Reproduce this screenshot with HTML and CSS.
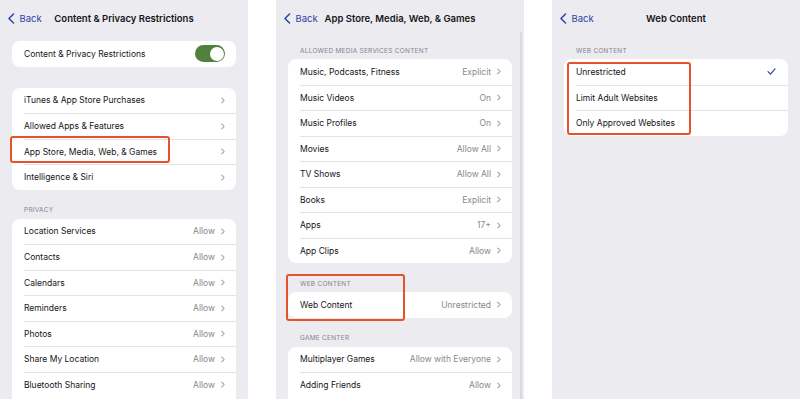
FILE: index.html
```html
<!DOCTYPE html>
<html lang="en">
<head>
  <meta charset="UTF-8" />
  <meta name="viewport" content="width=device-width, initial-scale=1.0"/>
  <title>Content &amp; Privacy Restrictions</title>
  <link rel="stylesheet" href="styles.css">
</head>
<body>

<div class="shots">

  <!-- 1 : Content & Privacy Restrictions -->
  <section class="phone">
    <header class="nav">
      <span class="back">
        <svg class="back-chev" viewBox="0 0 7 12"><path d="M6 1L1 6l5 5"/></svg>Back
      </span>
      <h1 class="title">Content &amp; Privacy Restrictions</h1>
      <span></span>
    </header>

    <div class="group group-first">
      <ul class="card">
        <li class="row"><span class="label">Content &amp; Privacy Restrictions</span><span class="toggle"></span></li>
      </ul>
    </div>

    <div class="group group-plain">
      <ul class="card">
        <li class="row"><span class="label">iTunes &amp; App Store Purchases</span><svg class="chev" viewBox="0 0 5 8"><path d="M1 1l3 3-3 3"/></svg></li>
        <li class="row"><span class="label">Allowed Apps &amp; Features</span><svg class="chev" viewBox="0 0 5 8"><path d="M1 1l3 3-3 3"/></svg></li>
        <li class="row"><span class="label">App Store, Media, Web, &amp; Games</span><svg class="chev" viewBox="0 0 5 8"><path d="M1 1l3 3-3 3"/></svg></li>
        <li class="row"><span class="label">Intelligence &amp; Siri</span><svg class="chev" viewBox="0 0 5 8"><path d="M1 1l3 3-3 3"/></svg></li>
      </ul>
    </div>

    <div class="group">
      <div class="group-head">Privacy</div>
      <ul class="card card-open">
        <li class="row"><span class="label">Location Services</span><span class="value">Allow</span><svg class="chev" viewBox="0 0 5 8"><path d="M1 1l3 3-3 3"/></svg></li>
        <li class="row"><span class="label">Contacts</span><span class="value">Allow</span><svg class="chev" viewBox="0 0 5 8"><path d="M1 1l3 3-3 3"/></svg></li>
        <li class="row"><span class="label">Calendars</span><span class="value">Allow</span><svg class="chev" viewBox="0 0 5 8"><path d="M1 1l3 3-3 3"/></svg></li>
        <li class="row"><span class="label">Reminders</span><span class="value">Allow</span><svg class="chev" viewBox="0 0 5 8"><path d="M1 1l3 3-3 3"/></svg></li>
        <li class="row"><span class="label">Photos</span><span class="value">Allow</span><svg class="chev" viewBox="0 0 5 8"><path d="M1 1l3 3-3 3"/></svg></li>
        <li class="row"><span class="label">Share My Location</span><span class="value">Allow</span><svg class="chev" viewBox="0 0 5 8"><path d="M1 1l3 3-3 3"/></svg></li>
        <li class="row"><span class="label">Bluetooth Sharing</span><span class="value">Allow</span><svg class="chev" viewBox="0 0 5 8"><path d="M1 1l3 3-3 3"/></svg></li>
      </ul>
    </div>

    <div class="mark mark-1"></div>
  </section>

  <!-- 2 : App Store, Media, Web, & Games -->
  <section class="phone">
    <header class="nav">
      <span class="back">
        <svg class="back-chev" viewBox="0 0 7 12"><path d="M6 1L1 6l5 5"/></svg>Back
      </span>
      <h1 class="title">App Store, Media, Web, &amp; Games</h1>
      <span></span>
    </header>

    <div class="group">
      <div class="group-head">Allowed Media Services Content</div>
      <ul class="card">
        <li class="row"><span class="label">Music, Podcasts, Fitness</span><span class="value">Explicit</span><svg class="chev" viewBox="0 0 5 8"><path d="M1 1l3 3-3 3"/></svg></li>
        <li class="row"><span class="label">Music Videos</span><span class="value">On</span><svg class="chev" viewBox="0 0 5 8"><path d="M1 1l3 3-3 3"/></svg></li>
        <li class="row"><span class="label">Music Profiles</span><span class="value">On</span><svg class="chev" viewBox="0 0 5 8"><path d="M1 1l3 3-3 3"/></svg></li>
        <li class="row"><span class="label">Movies</span><span class="value">Allow All</span><svg class="chev" viewBox="0 0 5 8"><path d="M1 1l3 3-3 3"/></svg></li>
        <li class="row"><span class="label">TV Shows</span><span class="value">Allow All</span><svg class="chev" viewBox="0 0 5 8"><path d="M1 1l3 3-3 3"/></svg></li>
        <li class="row"><span class="label">Books</span><span class="value">Explicit</span><svg class="chev" viewBox="0 0 5 8"><path d="M1 1l3 3-3 3"/></svg></li>
        <li class="row"><span class="label">Apps</span><span class="value">17+</span><svg class="chev" viewBox="0 0 5 8"><path d="M1 1l3 3-3 3"/></svg></li>
        <li class="row"><span class="label">App Clips</span><span class="value">Allow</span><svg class="chev" viewBox="0 0 5 8"><path d="M1 1l3 3-3 3"/></svg></li>
      </ul>
    </div>

    <div class="group">
      <div class="group-head">Web Content</div>
      <ul class="card">
        <li class="row"><span class="label">Web Content</span><span class="value">Unrestricted</span><svg class="chev" viewBox="0 0 5 8"><path d="M1 1l3 3-3 3"/></svg></li>
      </ul>
    </div>

    <div class="group">
      <div class="group-head">Game Center</div>
      <ul class="card card-open">
        <li class="row"><span class="label">Multiplayer Games</span><span class="value">Allow with Everyone</span><svg class="chev" viewBox="0 0 5 8"><path d="M1 1l3 3-3 3"/></svg></li>
        <li class="row"><span class="label">Adding Friends</span><span class="value">Allow</span><svg class="chev" viewBox="0 0 5 8"><path d="M1 1l3 3-3 3"/></svg></li>
      </ul>
    </div>

    <div class="scroller"></div>
    <div class="mark mark-2"></div>
  </section>

  <!-- 3 : Web Content -->
  <section class="phone">
    <header class="nav">
      <span class="back">
        <svg class="back-chev" viewBox="0 0 7 12"><path d="M6 1L1 6l5 5"/></svg>Back
      </span>
      <h1 class="title">Web Content</h1>
      <span></span>
    </header>

    <div class="group">
      <div class="group-head">Web Content</div>
      <ul class="card">
        <li class="row"><span class="label">Unrestricted</span><svg class="check" viewBox="0 0 10 8"><path d="M1 4.2L3.8 7 9 1"/></svg></li>
        <li class="row"><span class="label">Limit Adult Websites</span></li>
        <li class="row"><span class="label">Only Approved Websites</span></li>
      </ul>
    </div>

    <div class="mark mark-3"></div>
  </section>

</div>

</body>
</html>
```

FILE: styles.css
```css
body {
  margin: 0;
  padding: 0;
  background-color: #fff;
  font-family: Inter, 'Liberation Sans', sans-serif;
  color: #151517;
}

.shots {
  display: flex;
  gap: 28px;
  height: 399px;
  overflow: hidden;
}

.phone {
  position: relative;
  width: 248px;
  flex: none;
  background: #ebebf0;
  overflow: hidden;
}

/* barre de navigation */
.nav {
  display: grid;
  grid-template-columns: 1fr auto 1fr;
  align-items: center;
  height: 36px;
  padding: 0 8px;
}

.back {
  display: flex;
  align-items: center;
  gap: 5px;
  color: #2e42a6;
  font-size: 9.5px;
}

.back-chev {
  width: 6.5px;
  height: 11px;
  fill: none;
  stroke: #2e42a6;
  stroke-width: 1.6;
  stroke-linecap: round;
  stroke-linejoin: round;
}

.title {
  margin: 0;
  font-size: 9.5px;
  font-weight: 600;
  white-space: nowrap;
}

/* groupes et cartes */
.group {
  margin: 16.5px 12px 0;
}

.nav + .group {
  margin-top: 10.5px;
}

.nav + .group-first {
  margin-top: 5px;
}

.group-plain {
  margin-top: 21px;
}

.group-head {
  padding: 0 12px 3.5px;
  font-size: 6.5px;
  line-height: 9px;
  letter-spacing: 0.25px;
  text-transform: uppercase;
  color: #86868b;
}

.card {
  list-style: none;
  margin: 0;
  padding: 0 0 0 12px;
  background: #fff;
  border-radius: 8px;
}

/* carte qui continue sous le bas de l'écran */
.card-open {
  padding-bottom: 12px;
}

.row {
  box-sizing: border-box;
  display: flex;
  align-items: center;
  height: 25.5px;
  padding-right: 11px;
  font-size: 8.5px;
  white-space: nowrap;
}

.row + .row,
.card-open::after {
  border-top: 1px solid #e4e4e8;
}

.value {
  margin-left: auto;
  color: #88888d;
}

.chev {
  width: 4px;
  height: 7px;
  margin-left: 6px;
  fill: none;
  stroke: #9c9ca1;
  stroke-width: 1.3;
  stroke-linecap: round;
  stroke-linejoin: round;
}

.label + .chev,
.label + .check,
.label + .toggle {
  margin-left: auto;
}

.check {
  width: 9px;
  height: 7px;
  margin-right: 1px;
  fill: none;
  stroke: #2e42a6;
  stroke-width: 1.4;
  stroke-linecap: round;
  stroke-linejoin: round;
}

.toggle {
  position: relative;
  width: 30px;
  height: 17px;
  border-radius: 9px;
  background: #51813d;
}

.toggle::after {
  content: "";
  position: absolute;
  right: 1.5px;
  top: 1.5px;
  width: 14px;
  height: 14px;
  border-radius: 50%;
  background: #fff;
}

/* indicateur de défilement */
.scroller {
  position: absolute;
  right: 2px;
  top: 32px;
  bottom: 0;
  width: 2px;
  background: #dadade;
}

/* cadres d'annotation */
.mark {
  position: absolute;
  box-sizing: border-box;
  border: 2px solid #e5532d;
  border-radius: 3px;
}

.mark-1 {
  left: 10px;
  top: 136px;
  width: 160px;
  height: 27px;
}

.mark-2 {
  left: 10px;
  top: 274px;
  width: 119px;
  height: 47px;
}

.mark-3 {
  left: 15px;
  top: 62px;
  width: 124px;
  height: 73px;
}
```
